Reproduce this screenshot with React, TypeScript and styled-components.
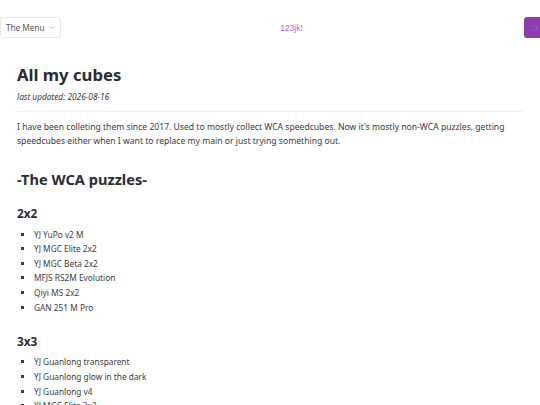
import React from 'react';
import styled, { createGlobalStyle } from 'styled-components';

const GlobalStyle = createGlobalStyle`
  html, body {
    margin: 0;
    padding: 0;
    background: #ffffff;
  }
  body {
    font-family: "Noto Sans", "Open Sans", sans-serif;
    color: #333338;
  }
  * {
    box-sizing: border-box;
  }
`;

const Page = styled.div`
  width: 540px;
  overflow: hidden;
`;

const TopBar = styled.header`
  display: grid;
  grid-template-columns: 1fr auto 1fr;
  align-items: center;
  padding-top: 17px;
  height: 38px;
`;

const MenuButton = styled.button`
  justify-self: start;
  display: flex;
  align-items: center;
  gap: 4px;
  height: 21px;
  padding: 0 4px 0 5px;
  font-family: "Noto Sans", sans-serif;
  font-size: 8.2px;
  color: #55585f;
  background: #ffffff;
  border: 1px solid #e6e8eb;
  border-radius: 3px;
`;

const Brand = styled.span`
  font-family: "Liberation Sans", Arial, sans-serif;
  font-size: 8.5px;
  color: #b460c9;
  padding-left: 43px;
`;

const AvatarButton = styled.div`
  justify-self: end;
  width: 21px;
  height: 21px;
  margin-right: -5px;
  border-radius: 3px;
  background: #8e3cb0;
  color: #a45bc4;
  font-family: "Liberation Sans", sans-serif;
  font-size: 8px;
  display: flex;
  align-items: center;
  justify-content: center;
`;

const Content = styled.main`
  padding: 26px 17px 0;
`;

const Title = styled.h1`
  margin: 0;
  font-size: 16.7px;
  line-height: 22px;
  font-weight: 700;
  color: #2b2c33;
`;

const Updated = styled.p`
  margin: 4.5px 0 0;
  font-size: 8.3px;
  line-height: 12px;
  font-style: italic;
  color: #3a3b40;
`;

const Rule = styled.hr`
  margin: 8.5px 0 0;
  border: none;
  border-top: 1px solid #f0f0f2;
`;

const Intro = styled.p`
  margin: 8px 0 0;
  font-size: 8.6px;
  line-height: 14px;
  color: #3a3b40;
`;

const SectionTitle = styled.h2`
  margin: 21px 0 0;
  font-size: 14.6px;
  line-height: 20px;
  font-weight: 700;
  color: #2b2c33;
`;

const GroupTitle = styled.h3<{ $first?: boolean }>`
  margin: ${p => (p.$first ? '16px' : '17.5px')} 0 0;
  font-size: 11.8px;
  line-height: 16px;
  font-weight: 700;
  color: #2b2c33;
`;

const ItemList = styled.ul`
  margin: 6.5px 0 0;
  padding: 0 0 0 17px;
  list-style: square;
`;

const Item = styled.li`
  font-size: 8.3px;
  line-height: 14.66px;
  color: #3a3b40;
`;

const groups = [
  {
    name: '2x2',
    items: [
      'YJ YuPo v2 M',
      'YJ MGC Elite 2x2',
      'YJ MGC Beta 2x2',
      'MFJS RS2M Evolution',
      'Qiyi MS 2x2',
      'GAN 251 M Pro',
    ],
  },
  {
    name: '3x3',
    items: [
      'YJ Guanlong transparent',
      'YJ Guanlong glow in the dark',
      'YJ Guanlong v4',
      'YJ MGC Elite 3x3',
      'YJ MGC v2 3x3',
    ],
  },
];

function Chevron() {
  return (
    <svg width="7" height="7" viewBox="0 0 24 24" fill="none" stroke="#8a8d93" strokeWidth="2" strokeLinecap="round" strokeLinejoin="round">
      <path d="m6 9 6 6 6-6" />
    </svg>
  );
}

export default function App() {
  return (
    <Page>
      <GlobalStyle />
      <TopBar>
        <MenuButton>
          The Menu
          <Chevron />
        </MenuButton>
        <Brand>123jk!</Brand>
        <AvatarButton>:3</AvatarButton>
      </TopBar>

      <Content>
        <Title>All my cubes</Title>
        <Updated>last updated: 2026-08-16</Updated>
        <Rule />
        <Intro>
          I have been colleting them since 2017. Used to mostly collect WCA speedcubes. Now it's mostly
          non-WCA puzzles, getting speedcubes either when I want to replace my main or just trying
          something out.
        </Intro>

        <SectionTitle>-The WCA puzzles-</SectionTitle>
        {groups.map((group, i) => (
          <section key={group.name}>
            <GroupTitle $first={i === 0}>{group.name}</GroupTitle>
            <ItemList>
              {group.items.map(item => (
                <Item key={item}>{item}</Item>
              ))}
            </ItemList>
          </section>
        ))}
      </Content>
    </Page>
  );
}
